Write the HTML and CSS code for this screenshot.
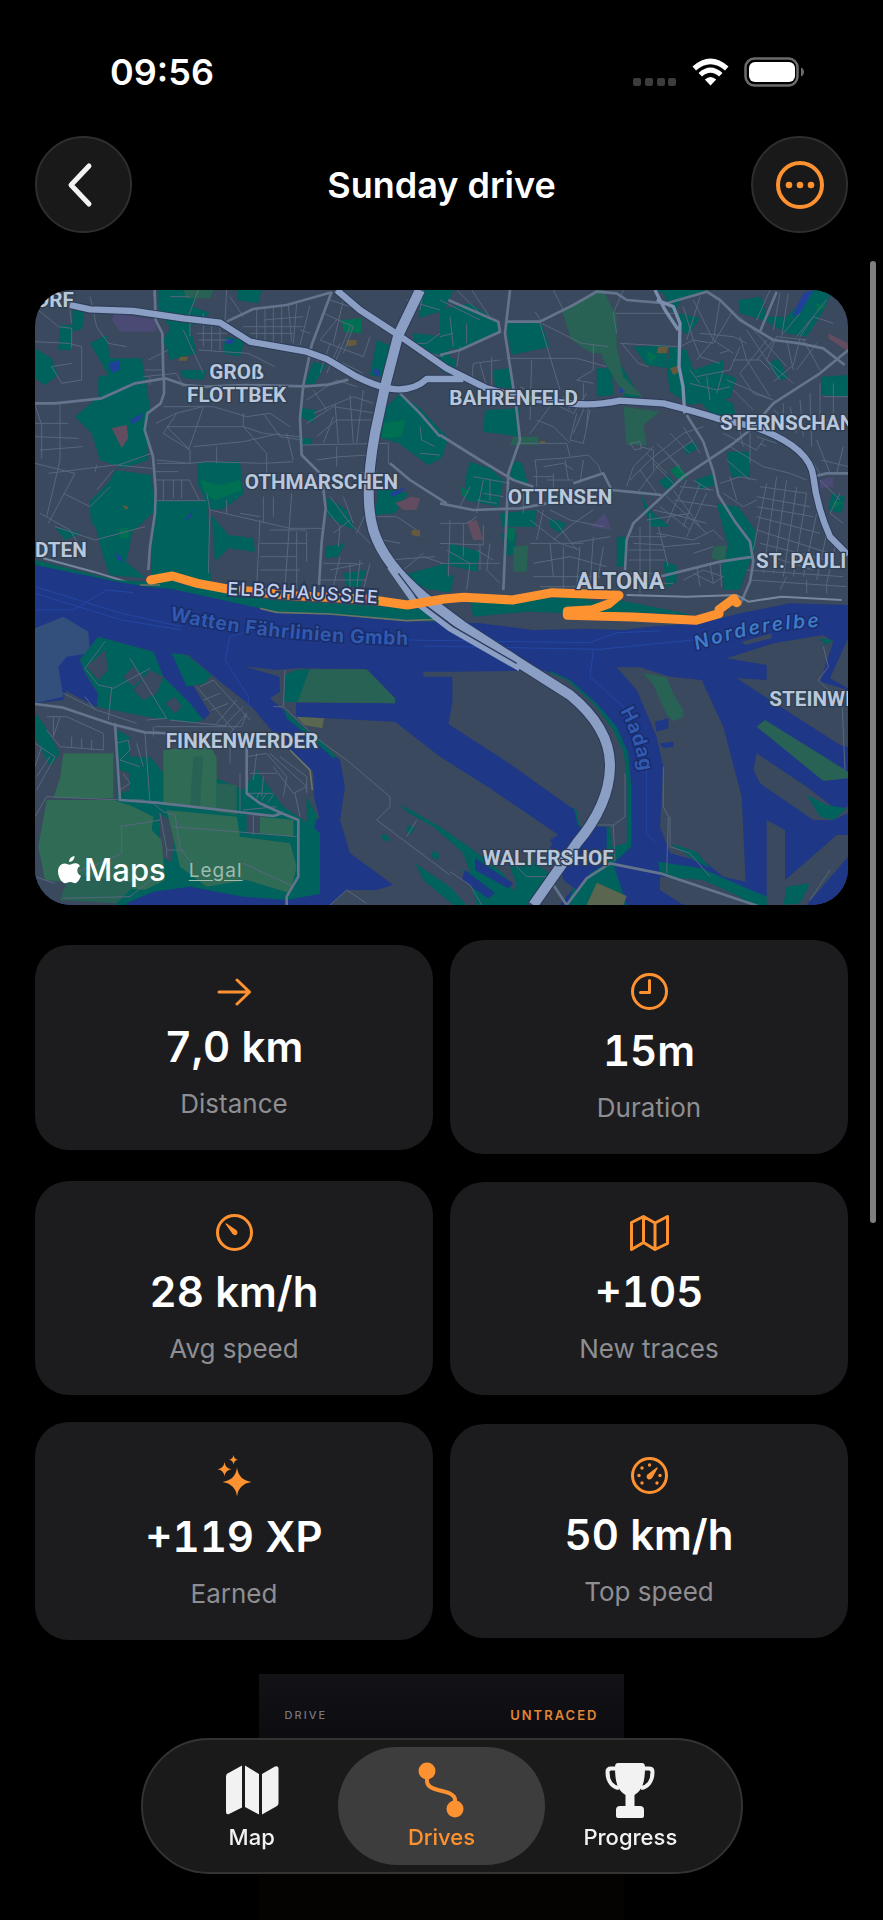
FILE: index.html
```html
<!DOCTYPE html>
<html lang="en">
<head>
  <meta charset="UTF-8">
  <meta name="viewport" content="width=device-width, initial-scale=1">
  <title>Sunday drive</title>
  <link rel="stylesheet" href="styles.css">
</head>
<body>
  <div class="status-bar">
    <span class="time">09:56</span>
    <div class="status-icons">
      <svg class="signal" viewBox="0 0 44 8" aria-hidden="true">
        <rect x="0" y="0" width="8" height="8" rx="2"/><rect x="12" y="0" width="8" height="8" rx="2"/>
        <rect x="24" y="0" width="8" height="8" rx="2"/><rect x="35" y="0" width="8" height="8" rx="2"/>
      </svg>
      <svg class="wifi" viewBox="0 0 37 28" aria-hidden="true">
        <path d="M0.500 8.500Q18.500 -7.500 36.500 8.500L33 12.500Q18.500 0 4 12.500Z"/>
        <path d="M6.500 15Q18.500 4 30.500 15L27 18.500Q18.500 11 10 18.500Z"/>
        <path d="M12.800 21.500Q18.500 16.500 24.200 21.500L18.500 27.500Z"/>
      </svg>
      <svg class="battery" viewBox="0 0 61 30" aria-hidden="true">
        <rect x="1.500" y="1.500" width="52" height="27" rx="9" fill="none" stroke="#6b6b6b" stroke-width="2.500"/>
        <rect x="5" y="5" width="46" height="20" rx="6" fill="#fff"/>
        <path d="M57 10.500q3 1.500 3 4.500t-3 4.500z" fill="#6b6b6b"/>
      </svg>
    </div>
  </div>

  <header class="nav-bar">
    <button class="round-btn" type="button" aria-label="Back">
      <svg width="48" height="48" viewBox="0 0 48 48"><path d="M29 5 11 24l18 19" fill="none" stroke="#f2f2f2" stroke-width="5" stroke-linecap="round" stroke-linejoin="round"/></svg>
    </button>
    <h1>Sunday drive</h1>
    <button class="round-btn" type="button" aria-label="More">
      <svg width="48" height="48" viewBox="0 0 48 48"><circle cx="24" cy="24" r="22" fill="none" stroke="#ff9230" stroke-width="4"/><g fill="#ff9230"><circle cx="13" cy="24" r="3.300"/><circle cx="24" cy="24" r="3.300"/><circle cx="35" cy="24" r="3.300"/></g></svg>
    </button>
  </header>

  <main>
    <section class="map">
      <svg class="map-canvas" viewBox="15 30 2439 1845" role="img" aria-label="Route map">
        <rect class="land" x="15" y="30" width="2439" height="1845"/>

        <!-- parks -->
        <g class="park">
          <path d="M15 205l50 30 20 50-40 30-30-20zM90 135h35v75h-40zM128 75l34 20-5 50-30 10zM180 190l50-25 10 70 95 0 25 145-10 70 5 90-75 25-70-25-25-80-50-50 70-60 0-60 30-5z"/>
          <path d="M385 30h120l-15 50 50 20-60 40 20 80-80 20-20-60 20-35-35-60z"/>
          <path d="M255 570l110 15 8 110-65 60-20 90 60 50-110-10-20-60-20-80-15-20-5-60 60-60zM75 740l80 20-50 20z"/>
          <path d="M378 662h155l10 240-180 15 0-90z"/>
          <path d="M500 548l130-5 10 100-60 45-40 0-35-70zM545 705l50 60 75 10 5 40-80-10-40 40z"/>
          <path d="M585 170l60 10-15 50-50-10zM450 270l80 0-10 30-60-5zM620 30l75 0-10 40-60-10z"/>
          <path d="M850 245l40 10-40 60-25-5zM815 385l45 5-10 40-40-20zM815 475l30 0 0 20-30 0z"/>
          <path d="M1040 180l50 20-20 95-50-10zM1180 30h90l-25 60-80 25zM1150 160l100 10 10 60-60-10-50-35zM1060 390l50-50 60 45 85 90-20 60-40 20-90-65-60-20zM1045 620l90 20-40 60-60 5z"/>
          <path d="M890 650l60 40 25 60-40-15-45-30zM885 800l60-10-20 40-40 5zM1100 890l150-40 0 80-50 0zM940 880l70-10-20 50-40 0z"/>
        </g>
        <g class="park" transform="translate(1230 0)">
          <path d="M0 90l90-20 85 55 0 30-120 55-55-10zM195 130l110 0 25 70-115 25zM0 220l50 20-10 50-40-20zM160 270l50-5 5 60-50-5zM135 390l105-5 0 85-110-15zM90 545l60 20 40 35-15 80-100-20 0-60zM215 545l30 0 20 70-55-20z"/>
          <path d="M180 700l110-10-5 50-100 0zM30 790l90 25-10 60-85-20zM330 715l50 15-20 30-30-20zM185 760l45 0-5 60-30 10zM530 770h25v90h-25zM0 885l40 0-5 50-35 0z"/>
          <path d="M645 30h160l-80 30-25 40-30-60zM720 100l60 15-35 50-30-20zM580 200l100-5 0 70-60-10zM690 200l50 10 20 60 90-30 0 40 40 15-20 60-120 20-60-40-10-60z"/>
          <path d="M520 160l20 90 60 100-40 10-50-90zM470 265l45 0 5 80-50 5zM895 60l70-10 15 60 60 0 80-80 60 0-40 80-40 60-60-10-70-40-70-20zM985 250l30-15 30 60-30 5zM1145 290l80-5 0 65-80-5z"/>
          <path d="M765 600l60-20 0 35-45 15zM860 515h70v75h-55l-10-40zM830 670l65 10 50 70 0 60-25 60-20 60-50 0-5-70 20-60-20-70zM730 500l35-15 10 20-35 20zM655 605l30-20 20 25-25 20zM600 640l30 50 60 50-60 0zM730 310l150 60 10 60-60-10z"/>
          <path d="M670 845l40 10 0 50-30 20zM1175 640l40 10-10 50-40-10z"/>
        </g>
        <g class="meadow">
          <path d="M1595 90l120-60 40 100-10 90-60 0-60-40zM1690 30l30 0 40 80 0 90 20 90 60 60-60-10-60-100-20-90 30-60zM1780 380l110 15-50 40 10 60-60 0z"/>
          <path d="M1450 470h75v25h-85zM1450 800l45-5-5 80-40 0zM2050 800l40-5-5 50-40-10zM460 30h90l-10 25-70 0z"/>
        </g>
        <path class="lawn" d="M935 120l60-5 0 45-55-5zM1060 430l65-10-10 50-60 5zM510 600l60 15 60-15 5 30-80 30-30-20zM1850 210l30 20-20 20zM1290 620l30 15-20 20zM1920 570l25-15 30 35-25 15zM2360 70l30 10-30 15zM2410 660l30 10-30 15zM1430 745l25 0-5 40-20-10zM270 745h25v30h-25z"/>
        <path class="violet" d="M255 100l125 20v35h-110l-25-35zM1680 740l45-40 20 50zM2370 600l40-10 0 30-40 5z"/>
        <path class="rose" d="M1095 670l50-20 25 5-10 35-40 0zM1310 725l30-5 20 60-30 0zM2395 160l60 30 0 25-60-40zM245 445l45-10 5 40-20 30z"/>
        <path class="brown" d="M950 180l30 0 0 15-30 5zM1885 200l30 0-5 20-30 0zM1920 265l30-10 0 20-20 10zM275 675l20 5-5 10zM1145 750l25 0 0 20-25-5zM450 230l25 0-5 12-25 0zM1530 483h15v8h-15z"/>
        <path class="pond" d="M235 250l35-10 0 30-25 8zM300 420l40-20-10 20-25 12zM465 720l25-30-10 25zM585 178l25 0 0 12-20 2zM255 820l20 10 5 15-15-5zM1080 640l50-20-20 20-25 10zM1030 265l20 5 0 20-15-5zM1770 320l15 15-15 5zM2290 100l30-60 30-10-40 70-20 10z"/>

        <!-- residential streets -->
        <g class="street">
          <path d="M15 185l100 5 40 10 0 100-60 10-30-50 60-10M25 90l60 50 40 5 0 60M115 50l10 80M180 50l20 90 35 50 55 10M200 80l40 0M15 375l20 60 0 100M90 370v170l-40 170M15 430h100M15 470l130 5M30 510l130-10M15 550l120 30-80 150M55 580l200-25 110 10M370 45l5-15M460 150l60 130M505 210l150 10 80 40"/>
          <path d="M200 555l-5 20M365 520l-100 35M240 620l-60 60-80-40M250 570l-50 60M75 740l120 40 150-40M30 700l90 50 30 50M340 290l100-10 20 40M345 270l50 0M355 240l60-30M360 290v25M378 430l60-30 80-20M400 380l150 0 100 30 70-10 60 40M440 400l-40 60 80 50 0 40-100 0M380 540l100 10 50-5 170 5 90-5M410 440l230 0 60 20 110 10M480 510l-70-70M520 380l-20 60-25 70M640 400v40l70 80 0 60M490 500l150-15 110-25M560 500l0 50M700 400l50 70 70 10M770 460l20 80"/>
          <path d="M375 575h70M378 600h100l30 60M400 600v60M430 600v55M455 600v55M378 662h150M530 640l10 50 240 55 100 0M540 690l-5 190M590 660v40M690 720l-10 200M700 650v80M730 650v60M785 640l-20 280M720 750h110M690 790h140M690 830h110M690 870h120M800 755v170M830 755v90M690 710l-60-10"/>
          <path d="M500 160h90M505 180h90M480 120v50M520 100v100M545 110v100M570 120v90M590 30l-5 90M600 50l40 60M505 30l-30 80M420 50h60M680 90v90M705 85v100M730 85v110M755 80v120M775 75l10 110M800 70l-10 120M640 140h180M660 160h130M700 120l120-10M810 150l30 10M840 75l-30 120"/>
          <path d="M880 100l90 40-30 80M900 60l120 40 20 40M920 120l-50 60M940 60l-30 130M870 180l130 50 20-60M890 280l40-90M860 240l80 10 60 30M900 190l-30 90M960 140l-50 120M830 360l90-60 60 20M850 400l120-50 60 20M830 430l80-50 130 20M860 470l60-50 110 0M880 490l30-80M850 330l40 60M915 370l10 120M960 345l10 145M1000 330l-20 160M815 495l260-5M860 540l70-10 90-5M920 500v60M940 590l100-20M1075 490v60l30 20"/>
          <path d="M900 650l60 80 60 60M890 690l40 50-5 60M960 720l-50 40M980 760l40-90M940 650l30 80M1040 710l60 0 60 40M1075 840l140-10M1120 870l60-50M1060 780l50 10M880 850h100M900 870l100-20M930 830l-20 90M960 850v80M990 840l-10 90M1020 850l-20 80M870 900h140M1180 830l60 20M1150 190l40 0 40-30M1160 210l80 20M1170 440l5 40 40 20M1180 30l-10 60M1130 60l100 30M1170 520l60 5"/>
        </g>
        <g class="street" transform="translate(1230 0)">
          <path d="M0 60l120 60M50 30l70 70M95 30l60 90M30 110l10 90M60 200l-10 60M0 170l40-10M80 130v60M155 230v90M180 240l-80 10-5 60M200 235l210 0 90 25M120 250l20 70M275 240l-5 180M300 130l60 200M305 130l120 60 80 10M240 320l160 80 40-60M430 310l0 80-30 70M410 400l-20 80 40 10 20-100M370 350l20 40M290 420l50 20 50 50M270 460l60-80M240 490l140 0 10 40M285 95l20 30M340 30l30 60M410 300l50 10M425 370l20 10-5 60M460 190v80l-50 30M550 30l-30 70 10 60M525 100l190 0M540 190l170 10M545 190l50 60 30 10"/>
          <path d="M285 540l80-5 80-10 30 30 10 30M285 540l5 40 0 40M310 560l60-10 30 20M320 600h80M340 580v60M280 590h60M350 640l70-10M375 540l10 60M430 540l-10 70M130 600l-20 100M150 600v60M130 640l60 10M110 660l60 10M100 590l110 20M90 620l-30 60M250 640l0 60M290 690l60 40 60 80M270 720l90 70 60 20M330 690l60 30 100 20M340 780l60-50 60-40M390 790l120-20M270 790h160M310 690l-20 90M280 850l110-20 110 30M330 790l10 100M370 800v140M420 800l-10 120M460 770l-10 150M490 800l-20 120M280 890h200M300 920h180M120 790l0 80M150 790l-10 80 40 40M0 790l130 5 0-60M0 730h80l30-20M30 720l-5 170M70 730v100M0 850h180M20 810l70 40-10 80M110 810l50 30"/>
          <path d="M570 490l30-5 5 20-20 5zM600 500l40 10 0 60M570 600l60-60 100-80 60-20M590 640l70-90 100-70M560 620l20-60 60-60M620 520l60 60M650 490l70 70M690 460l60 60M730 440l50 80M600 570l50 70M640 550l60 60M680 520l50 60M570 770l110 0M580 790l90 5M600 740l0 200M630 700l0 230M565 810h110M565 840h110M655 740l30 120M570 880l70 0M580 910h120M620 720l130-20M640 690l90 20M650 760l110 20M670 800l110-10"/>
          <path d="M720 620l100 10M700 660l130 20M690 700l110 30M680 650l120 110M740 600l-60 130M780 610l-50 130M800 640l-60 130M760 600l50 30M700 630l80 110M660 680l90 70"/>
          <path d="M730 80l30 100-40 20M760 60l60 120 60 40M780 50l-40 130M840 60l-20 120-50 60M880 90l-60 100-60-10M900 110l60 60 80 90M870 210l-30 10M780 160l100 10 40 20M760 180l20 50 60 20M770 290l100-20 30-70M750 310l80 20 40-10M750 270l30 40M800 290l10 70M850 270l-20 70M900 170l20 70 70 110M920 150l100 150M880 330l60 60M900 280l40 60 60 20M860 300l140 60M950 240l60-70 90 10M980 180l-80 100M1010 170l-30 70 80 70M1040 180l20 90M1080 175l-20 80-60 50M1090 180l50 90M1130 190l-60 80M880 240l80 0 30 30M1000 150l20-110M1045 40l-20 130M1080 100l-50 60M1120 110l-40 60M1160 60l-90 110M1180 130l-60-20M950 120l40-90"/>
          <path d="M890 410l20 90M930 460v90M950 470l60 20M850 460l100 50 20-30M960 490l20 10M870 500l100 60 80 20 50 20M860 540l70 60M1030 410v-40M1000 390l80 60M1050 380l20 80M1080 360l10 110M1110 340l5 160M1140 310v110M1150 350h80M1180 310v90M1160 420l60 10M1130 480l40 100M1210 500l-20 80M1145 540l80 20M1140 580l-20-30"/>
          <path d="M960 620l140 20M950 650l160 30M950 680l170 30M950 710l190 50M950 750l220 70M960 790l200 50M960 820l160 50M980 610l-40 200M1010 590l-40 290M1040 600l-40 280M1070 620l-40 270M1100 640l-40 250M1130 700l-40 190M1160 760l-30 140M1190 780l-30 130M920 870l290 20M930 900l290 20M1200 640l-30 60 40 30M1140 600l60 60M840 610l60-20 50 10M850 640l60 40 40-20M870 590l20 70M760 780l60-30 30 30M760 820l60-20M730 900l60-30 60 20M760 880l60 30 30-20M770 860l10 60M810 850l10 60M840 850l5 70M1040 890l-20 40M1100 900v40M1160 910v30"/>
        </g>

        <!-- main streets -->
        <g class="road">
          <path d="M15 370h60l140-15 100-45 90-15 60 20 60 5 120-5 180 4 70-5 60-15M400 290l-3-130-20-40-3-90M402 290v50l-10 30-40 30-8 50 25 80 8 100-2 70-15 100-5 70M590 125l80-38 100-12 135-38M905 35l-60 160-25 120-10 100 5 110 60 60 12 100-12 100-8 130M1110 340l60 60 60 70M1080 550l60 50 110 70"/>
          <path d="M1230 225l60-15 120-55-5-30-150-65M1440 30l-15 130 35 230 10 90-35 100-5 120-10 230M1430 125l100 0 100-50 70-40 60 5 30 20 120 10 120-35 40 25 60 60 100 60 80 10 70 15 64 50M1230 465l120 75 100 60 60 20M1230 670l100 20 140-5 80-15M1630 610l90-30 25 50 50 5 100 10M1785 870l5-90 20-50 150-140 150-100 50-40 70-80 140-90 85-70M1970 405l50 80 30 90 15 70 50 80 45 60 10 60-10 60-30 70M1890 890l180-45 100-15M2190 155l50-120M2350 590l40-10 64 0"/>
        </g>
        <path class="rail" d="M40 835l150 40 130 40 40-5M1790 945l180 5 150-5 35 20 100-15 180 10"/>

        <!-- Elbe, harbour basins and islands -->
        <g transform="translate(0 900)">
          <path class="park" d="M15-60l240 60 180 10 290 50 500 30 0 35-600-20-625-100z"/>
          <path class="water" d="M15-45L260 5 350 20 430 28 690 85 740 97 900 104 1130 124 1230 125 1350 130 1510 150 1780 145 2010 130 2130 100 2280 70 2454 75V975H15z"/>
          <path class="airfield" d="M15 145l85-35 75 45 5 65-70 10-25 30 15 90-85 20z"/>
          <path class="land" d="M15 370l85-10 8-28 92 50 5-40-40-62-15-40 55-70 165 45 30 75 80 80 40 50 20-20-110-180 45 5 90 75 100 80 100 120 85 75 2 75 16 65-33 5v255H15z"/>
          <path class="park" d="M205 170l165 45 30 75 80 80 40 50-30 10-140-20-150-30 5-40-40-62-15-40zM425 220l45 5 75 60-20 25-55 10zM15 400l25 30 50 90-30 40-45-90zM260 450l40 20 0 60 60 0 50 60 140 0 90 40 40-60 80 110 90 60 20 20v215H260zM830 650l33 60-33 100z"/>
          <path class="land" d="M170 260l55-50 10 60-30 30zM280 290l30-30 30 30-30 30zM310 330l50-60 40 20-20 50-40 20zM405 370l30-20 20 30-20 20zM270 570l30 10 0 50-30 10zM650 700h55v60h-55zM385 700l50 30-10 120-30-20z"/>
          <path class="farm" d="M100 520h150v135h-180l20-60zM400 510l140-15 20 40 0 150-160-10zM50 660l200 0 60 20 60 30-5 40 30 30 10 120-60 30-300-30-20-100zM410 690l210 20 10 60 150 20 20 70-20 80-130-40-120 20-80-60zM690 710l100 10v50l-100-10z"/>
          <path class="meadow" d="M560 610l60 5 0 90-60-10zM490 530h30l-10 150h-30zM120 880l200 30-60 60-170-10z"/>
          <path class="water" d="M290 970l80-35 110-15 160 30 130 10 110-20v40H290z"/>
          <!-- Waltershof, west of the canal -->
          <path class="land" d="M640 258L740 270 800 265 1010 268 1095 355V370L798 368V410L1095 425 1230 530 1380 625 1600 775 1560 800 1650 900 1590 975H900L950 930 1040 930 1090 915 960 820 930 720 945 620 930 540 860 480 760 390 720 355 750 335 748 290z"/>
          <path class="meadow" d="M840 268H1010L1095 355V370L800 366z"/>
          <path class="sand" d="M800 410l82 5-5 30-55-10z"/>
          <path class="park" d="M798 270l40-2-35 98h-40l0-80zM760 385l50 50 60 45 50 50-10 5-50-45-90-75zM1105 670L1230 740 1330 810 1420 880 1480 975H1340L1320 900 1240 800z"/>
          <path class="land" d="M1120 690l90 50 90 80 20 60-80-40-90-90z"/>
          <path class="park" d="M1060 760l20 15-8 12-20-15zM1135 735l20 10-15 20-12-10zM1210 810l18 15-6 18-18-15zM1155 850L1260 920 1310 975H1270L1180 900z"/>
          <path class="park" d="M1440 860l60-20 60 40-70 95h-50l20-60z"/>
          <path class="water" d="M1335 835l115 75-15 15-100-55zM1305 870l90 70-20 15-80-55z"/>
          <!-- Waltershof, inside the motorway bend -->
          <path class="park" d="M1560 272L1620 300 1700 370 1760 440 1795 520 1804 620V800L1750 850 1790 975H1610L1640 900 1730 850V740H1645L1630 680z"/>
          <path class="land" d="M1180 275H1260L1545 272 1610 300 1690 370 1750 450 1782 520 1790 600V790L1745 800 1740 740H1650L1640 690 1620 680 1430 545 1255 432 1267 370V290H1180z"/>
          <path class="water" d="M1590 850L1640 740H1727V850L1680 880 1640 930 1600 900z"/>
          <path class="sand" d="M1700 908l90 40-10 27h-110z"/>
          <path class="water" d="M1560 780l40-25 40 5-60 60z"/>
        </g>
        <g transform="translate(1230 900)">
          <path class="land" d="M530 262h70l90 28 95 10 65 140 55 210 12 255-67-15-50-40-110-30-30-80 10-180-20-90-60-140z"/>
          <path class="meadow" d="M610 280l70 12 20 50 30 50 0 20-30 12-20-20-40-90z"/>
          <path class="water" d="M645 425l40-10 0 30-35 10zM660 490l40-5 0 15-30 5z"/>
          <path class="park" d="M655 845l130 20 170 75 60 20v15H930l-90-50-180-40zM690 790l80 25 40 50-40-20z"/>
          <path class="land" d="M660 890l130 10 110 50 30 25H730l-70-45z"/>
          <path class="land" d="M860 235l140-45 150-25 30 20-40 120 84 25v170l-24-5-310-200 90 5v-45zM1170 295l54-120v150zM905 185l90-25 0 15-80 20zM400 145l160-30 110 10 0 10-120 15z"/>
          <path class="park" d="M90 60l190-10 290 20-20 35-290-10-160 15z"/>
          <path class="park" d="M320 40l150 5-60 35zM510 55l250 50-220-10z"/>
          <path class="meadow" d="M950 440l25-20 249 155v20l-74 8z"/>
          <path class="land" d="M950 520l150 100 90 70 34-10v20l-44 20h-60L960 610l-20-40zM980 720l55 30v150l70-60 85-75h34v65l-124 145H980z"/>
          <path class="park" d="M1100 645l60 30 60 10-40 35-40-10zM1040 920l70-10-30 60-50 5zM1135 175l45 5-20 15z"/>
        </g>

        <g class="ferry">
          <path d="M15 990h115l100-60 80 8M15 920l260 80 180 40M15 940l260 80 180 30M600 1070l-15 70 70 110 0 30M600 1070l70-20M1130 1080l550 8 80-30 130-5M1180 1098l530 10 300-30M1690 1110l-10 80 100 90 70 180 0 200 30 30"/>
        </g>
        <g class="street">
          <path d="M225 1085l-60 80 40 50 45 10 110-60M300 1135l110 180-60 5M245 1220l-10 100M100 1240l40 20 60 30 120 40M165 1250l30 40M50 1310l60 0 110 50 0 50-130-10-40-50M70 1310v60M90 1310l-20 60M125 1370v30M155 1375v30M185 1380v30M15 1390l60 40-55 100M35 1400l-20 60M60 1430l-40 60M375 1340h260l15-40-50 60M370 1360h60M370 1340v30M420 1320l170 18M500 1220l110 130M510 1220l40-20 110 120M520 1260l50-20M545 1290l50-20M580 1340l60-60M560 1330l60-70"/>
          <path d="M260 1390l35-10 5 30-30 30 60 20M320 1390l20 70M345 1360l15 210M280 1480l20 30-30 20M340 1560l-35 0M600 1450v-60M650 1430l60-10 60 70-10 60M680 1420l-10 80M720 1420l110 100-40 20-60-80M750 1430l80 60 0 50M660 1480h80M630 1480v110M640 1590l100-10M700 1490l-5 60M650 1540h80M690 1535l-10 20M710 1540l-15 20M730 1545l-15 20M795 1540l15 70"/>
          <path d="M15 1610l35-60 230 10 90 10 30 25 35 10 15 100 40 50M270 1640l120-20M275 1640v80l-90 40-60 20M390 1600l20 110 0 20M430 1640l370 30M670 1605v60M410 1710h50M640 1750l130 60 20 10M15 1790l60 20M100 1855l200-5 100-80M765 1170l-5 110 100 95 90 65 130 110 0 30-40 40 220 165M730 1280h30M900 1875l50-45 60 40M1130 1670l30-50M1260 1775l60 40 35 60M1450 1750l40 40 60 0"/>
          <path d="M1785 1480v130l-40 30M1700 1635h50l5 110M1900 1460v120l15 30-5 170M1920 1610l0 90 60 20 60 70M2380 1100l15 60-30 40 30 30 40 10 10 230M2340 1860l60-90"/>
        </g>
        <g class="road">
          <path d="M15 1272l80 10 150 50 100 25 120 5M255 1330l15 230 110 8 350 40 30-10M650 1400v140l40 30 65 30 50 20 0 170-35 60v30"/>
          <path d="M1610 1875l60-80 70-45 150 30 180 60 120 40M1570 1815l40 60"/>
        </g>
        <path class="sand-line" d="M330 915l60 0M690 985l50 12 160 5 230 20 120 -5M780 1410l60 60 7 60"/>

        <!-- motorways -->
        <g class="highway-edge">
          <path d="M120 75L180 88 310 93 460 115 570 128 660 185 830 215 890 237 980 290Q1060 330 1110 328T1190 297H1300M920 30L990 90 1105 165 1250 265 1370 325 1480 355 1640 372Q1700 377 1770 362L1900 370Q2000 395 2060 415L2170 440Q2340 500 2350 590T2400 770L2454 825"/>
          <path class="thick" d="M1170 30L1105 165 1065 320 1035 460Q1000 650 1030 750T1180 950L1300 1040 1470 1150 1620 1245Q1742 1345 1740 1460T1640 1690L1510 1875"/>
        </g>
        <g class="highway">
          <path class="thin" d="M1875 30l30 60 40 60M1880 60l50 20 20 50-3 130 12 60 5 80"/>
          <path d="M120 75L180 88 310 93 460 115 570 128 660 185 830 215 890 237 980 290Q1060 330 1110 328T1190 297H1300M920 30L990 90 1105 165 1250 265 1370 325 1480 355 1640 372Q1700 377 1770 362L1900 370Q2000 395 2060 415L2170 440Q2340 500 2350 590T2400 770L2454 825"/>
          <path class="thick" d="M1170 30L1105 165 1065 320 1035 460Q1000 650 1030 750T1180 950L1300 1040 1470 1150 1620 1245Q1742 1345 1740 1460T1640 1690L1510 1875"/>
          <path d="M1080 860L1150 960 1260 1045 1470 1165"/>
        </g>
        <path class="lane" d="M1105 880L1170 965 1270 1040 1460 1150"/>

        <path class="route" d="M362 900l65-12 75 22 90 17 200 20 215 10 125 18 110-18 60-5 145 8 120-22 200 8-30 25-50 18-75 5 0 12 195 5 190 10 70-20 0-12 45-33 8 12"/>

        <defs>
          <path id="elbchaussee" d="M592 945Q840 955 1070 973"/>
          <path id="faehre" d="M418 1020Q700 1085 1160 1096"/>
          <path id="norderelbe" d="M2000 1111Q2180 1045 2400 1040"/>
          <path id="hadag" d="M1770 1293Q1815 1370 1834 1500"/>
        </defs>
        <g class="district">
          <text x="15" y="80">ORF</text>
          <text x="620" y="298" text-anchor="middle">GROß</text>
          <text x="620" y="367" text-anchor="middle">FLOTTBEK</text>
          <text x="874" y="627" text-anchor="middle">OTHMARSCHEN</text>
          <text x="15" y="830">DTEN</text>
          <text x="1451" y="374" text-anchor="middle">BAHRENFELD</text>
          <text x="1590" y="671" text-anchor="middle">OTTENSEN</text>
          <text x="2070" y="451">STERNSCHAN</text>
          <text x="2178" y="864">ST. PAULI</text>
          <text class="big" x="1771" y="927" text-anchor="middle">ALTONA</text>
          <text x="636" y="1403" text-anchor="middle">FINKENWERDER</text>
          <text x="2218" y="1278">STEINWE</text>
          <text x="1554" y="1754" text-anchor="middle">WALTERSHOF</text>
        </g>
        <text class="street-name"><textPath href="#elbchaussee">ELBCHAUSSEE</textPath></text>
        <text class="ferry-name"><textPath href="#faehre">Watten Fährlinien Gmbh</textPath></text>
        <text class="river-name"><textPath href="#norderelbe">Norderelbe</textPath></text>
        <text class="ferry-name"><textPath href="#hadag">Hadag</textPath></text>
      </svg>
      <div class="map-credit">
        <svg width="23" height="28" viewBox="0 0 23 28" aria-hidden="true"><path fill="#fff" d="M16.500 0c.2 3.200-2.300 6-5.300 6C10.900 3 13.500.3 16.500 0zM22 10c-4 2.500-3.500 8 1 9.800-1.300 3.700-3.600 7.400-6 7.400-1.800 0-2.500-1.100-4.800-1.100-2.400 0-3.200 1.100-4.900 1.100C3.700 27.200 0 20.800 0 15.500 0 10.300 3.300 7.400 6.600 7.400c2.100 0 3.800 1.300 5.100 1.300 1.200 0 3.200-1.500 5.700-1.400 1 0 3.300.4 4.600 2.700z"/></svg>
        <span class="map-brand">Maps</span>
        <a class="legal" href="#legal">Legal</a>
      </div>
    </section>

    <section class="stats">
      <div class="stat">
        <svg width="35" height="28" viewBox="0 0 35 28"><path d="M2 14h30M20 2l12.500 12L20 26" class="line"/></svg>
        <strong>7,0 km</strong>
        <span>Distance</span>
      </div>
      <div class="stat">
        <svg width="37" height="37" viewBox="0 0 37 37"><circle cx="18.500" cy="18.500" r="17" class="line"/><path d="M18.500 7.500v12H9.500" class="line"/></svg>
        <strong>15m</strong>
        <span>Duration</span>
      </div>
      <div class="stat">
        <svg width="37" height="37" viewBox="0 0 37 37"><circle cx="18.500" cy="18.500" r="17" class="line"/><path d="M9.500 10q0-1 1.200-.5l9.500 6.500q2.200 2 .7 4.200-2 2-4.300-.2z" class="solid"/></svg>
        <strong>28 km/h</strong>
        <span>Avg speed</span>
      </div>
      <div class="stat">
        <svg width="39" height="36" viewBox="0 0 39 36"><path d="M1.500 7.500 13.500 1.500l11.500 6.500 12.500-6.500v27L25 34.500l-11.500-7-12 7zM13.500 2v25.500M25 8v26" class="line"/></svg>
        <strong>+105</strong>
        <span>New traces</span>
      </div>
      <div class="stat">
        <svg width="35" height="41" viewBox="0 0 35 41"><g class="solid"><path d="M20 12.500Q21.500 25 34.500 27 21.500 29 20 41.500 18.500 29 5.500 27 18.500 25 20 12.500z"/><path d="M7.500 7Q8.200 13.300 14.500 14.300 8.200 15.300 7.500 21.500 6.800 15.300.5 14.300 6.800 13.300 7.500 7z"/><path d="M16.500 0Q17 4.200 21 4.800 17 5.400 16.500 9.600 16 5.400 12 4.800 16 4.200 16.500 0z"/></g></svg>
        <strong>+119 XP</strong>
        <span>Earned</span>
      </div>
      <div class="stat">
        <svg width="37" height="37" viewBox="0 0 37 37"><circle cx="18.500" cy="18.500" r="17" class="line"/><path d="M26 10.200q1 .3.500 1.300L21.500 20.500q-2.200 3-4.700 1.500-2.300-2-.3-4.500z" class="solid"/><g class="solid"><circle cx="18.500" cy="8" r="1.700"/><circle cx="11" cy="11" r="1.700"/><circle cx="8" cy="18.500" r="1.700"/><circle cx="29" cy="18.500" r="1.700"/><circle cx="11" cy="26" r="1.700"/><circle cx="26" cy="26" r="1.700"/></g></svg>
        <strong>50 km/h</strong>
        <span>Top speed</span>
      </div>
    </section>

    <section class="share-card">
      <span class="share-kind">DRIVE</span>
      <span class="share-brand">UNTRACED</span>
    </section>
  </main>

  <div class="scroll-thumb"></div>

  <nav class="tab-bar">
    <a class="tab" href="#map">
      <svg width="56" height="56" viewBox="0 0 56 56"><g fill="#f2f2f2"><path d="M2 14.500q0-2 1.500-3L18 3.500v42L5 52q-3 .8-3-2z"/><path d="M21 3.500 35 12v40.500L21 45z"/><path d="M38 12 51 4.500q3-1 3.500 1.500V41q0 2-1.500 3l-15 8.500z"/></g></svg>
      <span>Map</span>
    </a>
    <a class="tab active" href="#drives" aria-current="page">
      <svg width="56" height="56" viewBox="0 0 56 56"><circle cx="14" cy="9" r="8.500" fill="#ff9230"/><circle cx="42" cy="47" r="8.500" fill="#ff9230"/><path d="M14 12v7c0 5 4 7 11 9 9 2 17 4 17 10v9" fill="none" stroke="#ff9230" stroke-width="4"/></svg>
      <span>Drives</span>
    </a>
    <a class="tab" href="#progress">
      <svg width="56" height="56" viewBox="0 0 56 56"><path d="M14 6.500H9Q5.500 6.500 5.500 10C5.500 20 11 25 17 26M42 6.500h5q3.500 0 3.500 3.500C50.500 20 45 25 39 26" fill="none" stroke="#f2f2f2" stroke-width="4"/><path d="M16 1h24q3 0 3 4C43 20 40.500 28 32.500 33v11H38q4 0 4 4v6q0 2-2 2H16q-2 0-2-2v-6q0-4 4-4h5.500V33C15.500 28 13 20 13 5q0-4 3-4z" fill="#f2f2f2"/></svg>
      <span>Progress</span>
    </a>
  </nav>
</body>
</html>
```
FILE: styles.css
```css
* {
  box-sizing: border-box;
}

body {
  margin: 0;
  min-height: 100vh;
  display: flex;
  flex-direction: column;
  background: #000;
  color: #fff;
  font-family: Inter, "Liberation Sans", sans-serif;
}

/* status bar */
.status-bar {
  display: flex;
  justify-content: space-between;
  align-items: center;
  height: 136px;
  padding: 7px 78px 0 110px;
}

.time {
  font-size: 36px;
  font-weight: 600;
}

.status-icons {
  display: flex;
  align-items: center;
  gap: 15px;
}

.signal {
  width: 44px;
  height: 8px;
  margin-top: 20px;
  fill: #3c3c3c;
}

.wifi {
  width: 37px;
  height: 28px;
  fill: #fff;
}

.battery {
  width: 61px;
  height: 30px;
}

/* navigation bar */
.nav-bar {
  display: flex;
  justify-content: space-between;
  align-items: center;
  padding: 0 35px;
}

.nav-bar h1 {
  margin: 0;
  font-size: 36px;
  font-weight: 600;
}

.round-btn {
  display: flex;
  align-items: center;
  justify-content: center;
  width: 97px;
  height: 97px;
  padding: 0;
  border: 2px solid #2e2e2e;
  border-radius: 50%;
  background: #191919;
}

main {
  flex: 1;
  display: flex;
  flex-direction: column;
  padding: 57px 35px 0;
}

/* map */
.map {
  position: relative;
  border-radius: 36px;
  overflow: hidden;
}

.map-canvas {
  display: block;
  width: 100%;
}

.land { fill: #3a495d; }
.park { fill: #00625c; }
.meadow { fill: #286255; }
.farm { fill: #306b56; }
.lawn { fill: #007052; }
.violet { fill: #4b4a75; }
.rose { fill: #624c60; }
.brown { fill: #665a3c; }
.pond { fill: #21409a; }
.water { fill: #1e3787; }
.airfield { fill: #33507c; }
.sand { fill: #5a6650; }

.street,
.road,
.rail,
.ferry,
.sand-line,
.highway,
.highway-edge,
.lane,
.route {
  fill: none;
  stroke-linejoin: round;
}

.street {
  stroke: #57677d;
  stroke-width: 3;
}

.road {
  stroke: #64748c;
  stroke-width: 8;
}

.rail {
  stroke: #76869c;
  stroke-width: 6;
}

.ferry {
  stroke: #2347a3;
  stroke-width: 3;
}

.sand-line {
  stroke: #6d7465;
  stroke-width: 5;
}

.highway-edge {
  stroke: #2c3b5c;
  stroke-width: 25;
}

.highway-edge .thick {
  stroke-width: 36;
}

.highway {
  stroke: #8b9fc4;
  stroke-width: 19;
}

.highway .thick {
  stroke-width: 30;
}

.highway .thin {
  stroke: #7b8dac;
  stroke-width: 10;
}

.lane {
  stroke: #2c3b5c;
  stroke-width: 4;
}

.route {
  stroke: #ff9230;
  stroke-width: 27;
  stroke-linecap: round;
}

.district {
  fill: #b9c7da;
  stroke: #303e53;
  stroke-width: 8;
  paint-order: stroke;
  font-family: Roboto, sans-serif;
  font-size: 62px;
  font-weight: 700;
}

.district .big {
  font-size: 70px;
}

.street-name {
  fill: #c3cfea;
  stroke: #28385a;
  stroke-width: 12;
  paint-order: stroke;
  font-size: 54px;
  font-weight: 500;
  letter-spacing: 6px;
}

.ferry-name {
  fill: #3159b0;
  stroke: #182b66;
  stroke-width: 8;
  paint-order: stroke;
  font-size: 58px;
  font-weight: 700;
  letter-spacing: 2px;
}

.river-name {
  fill: #3f7bc8;
  stroke: #182b66;
  stroke-width: 8;
  paint-order: stroke;
  font-size: 58px;
  font-style: italic;
  font-weight: 600;
  letter-spacing: 7px;
}

.map-credit {
  position: absolute;
  left: 23px;
  bottom: 17px;
  display: flex;
  align-items: center;
  gap: 3px;
}

.map-brand {
  font-size: 31px;
  font-weight: 500;
  line-height: 36px;
}

.legal {
  margin-left: 20px;
  color: #9dbcae;
  font-size: 19px;
  letter-spacing: 1px;
  text-underline-offset: 3px;
}

/* stat cards */
.stats {
  display: grid;
  grid-template-columns: 1fr 1fr;
  align-items: center;
  gap: 27px 17px;
  margin-top: 35px;
}

.stat {
  display: flex;
  flex-direction: column;
  align-items: center;
  gap: 14px;
  padding: 33px 16px 31px;
  border-radius: 34px;
  background: #1c1c1e;
}

.stat strong {
  font-size: 42px;
  font-weight: 600;
  font-variant-numeric: tabular-nums;
  line-height: 54px;
}

.stat span {
  color: #8e8e93;
  font-size: 26px;
  line-height: 31px;
}

.line {
  fill: none;
  stroke: #ff9230;
  stroke-width: 3;
  stroke-linecap: round;
  stroke-linejoin: round;
}

.solid {
  fill: #ff9230;
}

/* preview of the share image, continues below the fold */
.share-card {
  flex: 1;
  align-self: center;
  display: flex;
  justify-content: space-between;
  align-items: flex-start;
  width: 45%;
  min-height: 245px;
  margin-top: 34px;
  padding: 33px 26px;
  background: linear-gradient(#121217, #0a0a0e 35%, #040302 80%);
}

.share-kind {
  color: #77777b;
  font-size: 11px;
  font-weight: 500;
  line-height: 16px;
  letter-spacing: 2px;
}

.share-brand {
  color: #e08534;
  font-size: 13px;
  font-weight: 600;
  line-height: 16px;
  letter-spacing: 2px;
}

.scroll-thumb {
  position: absolute;
  top: 261px;
  right: 7px;
  width: 6px;
  height: 962px;
  border-radius: 3px;
  background: #7f7f7f;
}

/* tab bar */
.tab-bar {
  position: fixed;
  left: 50%;
  bottom: 46px;
  transform: translateX(-50%);
  display: grid;
  grid-template-columns: repeat(3, 1fr);
  width: 602px;
  height: 136px;
  border: 2px solid #333;
  border-radius: 68px;
  background: rgba(28, 28, 28, 0.94);
}

.tab {
  display: flex;
  flex-direction: column;
  align-items: center;
  gap: 6px;
  margin: 7px 3px;
  padding-top: 15px;
  border-radius: 60px;
  color: #f2f2f2;
  font-size: 22px;
  font-weight: 500;
  line-height: 26px;
  text-decoration: none;
}

.tab:first-child {
  margin-left: 22px;
}

.tab:last-child {
  margin-right: 24px;
}

.tab.active {
  margin: 7px -4px;
  background: #3d3d3d;
  color: #ff9230;
}
```
